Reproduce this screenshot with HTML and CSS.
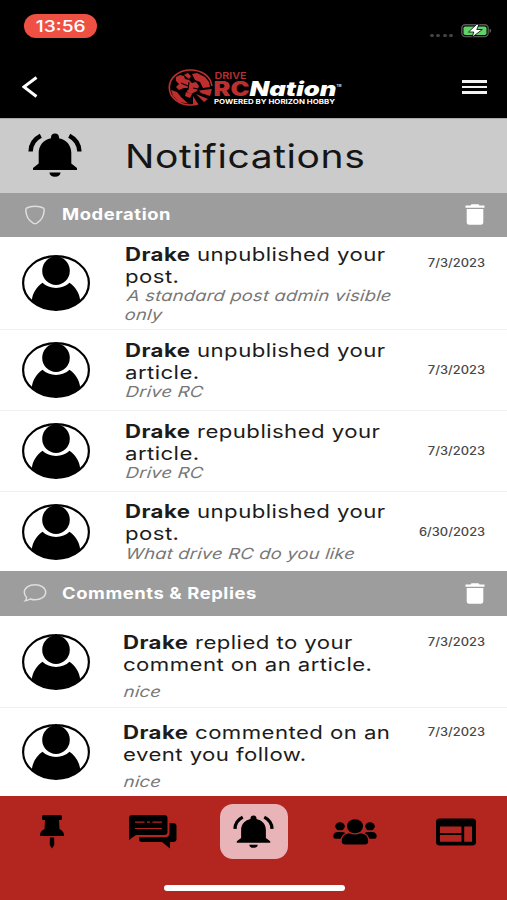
FILE: index.html
```html
<!DOCTYPE html>
<html lang="en">
<head>
<meta charset="utf-8">
<title>Notifications</title>
<link rel="stylesheet" href="styles.css">
</head>
<body>
<svg class="defs" width="0" height="0" aria-hidden="true">
  <symbol id="avatar" viewBox="0 0 68 56" preserveAspectRatio="none">
    <ellipse cx="34" cy="28" rx="32.9" ry="26.9" fill="#fff"/>
    <path d="M9.8 45.5C10.500 38 15 31.500 20.500 27.800C24 31 28.500 33 34 33C39.500 33 44 31 47.500 27.800C53 31.500 57.500 38 58.200 45.500C53 52 44 55 34 55S15 52 9.800 45.500Z"/>
    <ellipse cx="34" cy="15.800" rx="13.800" ry="14.200"/>
    <ellipse cx="34" cy="28" rx="32.900" ry="26.900" fill="none" stroke="#000" stroke-width="2.200"/>
  </symbol>
  <symbol id="bell" viewBox="0 0 54 44" preserveAspectRatio="none">
    <path d="M27 0.500C29.500 0.500 31 2 31 4.500V5.300C39 7 43.300 13 43.300 20V30.500L49 35V37H5V35L10.700 30.500V20C10.700 13 15 7 23 5.300V4.500C23 2 24.500 0.500 27 0.500ZM21.500 39.500H32.500C32.500 42 30.500 43.700 27 43.700S21.500 42 21.500 39.500Z"/>
    <path d="M2.600 18.500C2.800 11.500 6.500 6 12.800 2.800M51.400 18.500C51.200 11.500 47.500 6 41.200 2.800" fill="none" stroke="#000" stroke-width="4.400"/>
  </symbol>
  <symbol id="trash" viewBox="0 0 20 21" preserveAspectRatio="none">
    <path fill="#fff" d="M.5 1.500H5.500L6.500.3H13.500L14.500 1.500H19.500V3.800H.5ZM1.700 5H18.300V18.500Q18.300 20.700 15.800 20.700H4.200Q1.700 20.700 1.700 18.500Z"/>
  </symbol>
</svg>

<div class="screen">
  <header class="top">
    <div class="status">
      <div class="clock"><span>13:56</span></div>
      <div class="status-right">
        <span class="signal"><i></i><i></i><i></i><i></i></span>
        <svg class="battery" width="31" height="14" viewBox="0 0 31 14">
          <rect x=".8" y=".8" width="26.400" height="11.800" rx="3.500" fill="none" stroke="#585858" stroke-width="1.400"/>
          <path d="M29 5.200Q30.700 6.700 29 8.400Z" fill="#585858" stroke="#585858"/>
          <rect x="2.500" y="2.400" width="23" height="8.600" rx="1.800" fill="#5fd467"/>
          <path d="M15.800.3 7.500 8H12.800L11 13.300 21.300 5.500H15.800L18 .3Z" fill="#fff" stroke="#000" stroke-width=".8"/>
        </svg>
      </div>
    </div>
    <div class="bar">
      <svg class="back" width="17" height="22" viewBox="0 0 17 22"><path d="M14.500 1.500 2 10.900 14.500 20.500" fill="none" stroke="#fff" stroke-width="3"/></svg>
      <svg class="logo" width="176" height="40" viewBox="167 67 176 40">
        <path d="M211.800 86C211 76.500 202 70 190.500 70C178.500 70 169.300 78 169.300 87.500S178.500 105 190.500 105C193 105 196 104.500 198 104" fill="none" stroke="#bd2f2f" stroke-width="1.700"/>
        <g fill="#bd2f2f">
          <path d="M192 74 197 73 205 77 209 82 210 87 203 88 200 82 195 80Z"/>
          <path d="M176 77 180 75 184 76 185 79 189 80 192 83 196 82 199 86 197 91 191 94 187 92 188 88 184 88 179 90 176 87 179 84 176 81Z"/>
          <path d="M184 75 188 73 191 76 189 79ZM186 92 192 94 190 98 185 96Z"/>
          <path d="M171 90 177 92 181 97 188 103.500 179 102 173 96Z"/>
          <path d="M199 90.500 212 89 210 96 201 93ZM196 94 208 99 204 102ZM193 96 198 104 193 105Z"/>
        </g>
        <path d="M181 83 188 86M189 82 188 90M193 88 198 89" fill="none" stroke="#000" stroke-width="1.100"/>
        <g font-family="Inter, 'Liberation Sans', sans-serif">
          <text x="214.500" y="78.500" font-size="8.300" font-weight="600" fill="#bd2f2f" textLength="32" lengthAdjust="spacingAndGlyphs">DRIVE</text>
          <text x="213.500" y="95.500" font-size="19.500" font-weight="900" fill="#bd2f2f" textLength="36" lengthAdjust="spacingAndGlyphs">RC</text>
          <text x="249.500" y="95.500" font-size="20" font-weight="900" font-style="italic" fill="#fff" textLength="87" lengthAdjust="spacingAndGlyphs">Nation</text>
          <text x="214" y="103.800" font-size="6.600" font-weight="700" fill="#fff" textLength="121" lengthAdjust="spacingAndGlyphs">POWERED BY HORIZON HOBBY</text>
          <text x="336.500" y="87" font-size="3.500" font-weight="700" fill="#ddd" textLength="5" lengthAdjust="spacingAndGlyphs">TM</text>
        </g>
      </svg>
      <div class="menu"><i></i><i></i><i></i></div>
    </div>
  </header>

  <div class="title">
    <svg class="title-bell"><use href="#bell"/></svg>
    <h1>Notifications</h1>
  </div>

  <div class="section">
    <svg class="section-icon" viewBox="0 0 24 20"><path d="M12 1.200C15.500 1.200 18.500 1.900 20.300 3Q21.300 3.700 21.200 5C21 11.500 18.500 15.500 13.500 18.400Q12 19.200 10.500 18.400C5.500 15.500 3 11.500 2.800 5Q2.700 3.700 3.700 3C5.500 1.900 8.500 1.200 12 1.200Z"/></svg>
    <h2>Moderation</h2>
    <svg class="trash"><use href="#trash"/></svg>
  </div>
  <article class="row first">
    <svg class="avatar"><use href="#avatar"/></svg>
    <div class="body">
      <p class="line"><b>Drake</b> unpublished your<br>post.</p>
      <p class="note">A standard post admin visible<br>only</p>
    </div>
    <time>7/3/2023</time>
  </article>
  <article class="row">
    <svg class="avatar"><use href="#avatar"/></svg>
    <div class="body">
      <p class="line"><b>Drake</b> unpublished your<br>article.</p>
      <p class="note">Drive RC</p>
    </div>
    <time>7/3/2023</time>
  </article>
  <article class="row">
    <svg class="avatar"><use href="#avatar"/></svg>
    <div class="body">
      <p class="line"><b>Drake</b> republished your<br>article.</p>
      <p class="note">Drive RC</p>
    </div>
    <time>7/3/2023</time>
  </article>
  <article class="row short">
    <svg class="avatar"><use href="#avatar"/></svg>
    <div class="body">
      <p class="line"><b>Drake</b> unpublished your<br>post.</p>
      <p class="note">What drive RC do you like</p>
    </div>
    <time>6/30/2023</time>
  </article>

  <div class="section tall">
    <svg class="section-icon" viewBox="0 0 24 20"><path d="M2.300 17.700C3.300 16.700 3.700 15.500 3.500 14.300C2 12.800 1.300 11.200 1.300 9.300C1.300 5 6 1.700 12 1.700S22.700 5 22.700 9.300S18 16.800 12 16.800C10.300 16.800 8.700 16.500 7.300 16C5.800 17 4.200 17.600 2.300 17.700Z"/></svg>
    <h2>Comments &amp; Replies</h2>
    <svg class="trash"><use href="#trash"/></svg>
  </div>
  <article class="row comment">
    <svg class="avatar"><use href="#avatar"/></svg>
    <div class="body">
      <p class="line"><b>Drake</b> replied to your<br>comment on an article.</p>
      <p class="note">nice</p>
    </div>
    <time>7/3/2023</time>
  </article>
  <article class="row comment last">
    <svg class="avatar"><use href="#avatar"/></svg>
    <div class="body">
      <p class="line"><b>Drake</b> commented on an<br>event you follow.</p>
      <p class="note">nice</p>
    </div>
    <time>7/3/2023</time>
  </article>

  <nav class="tabs">
    <div class="tab-row">
      <div class="tab"><svg width="26" height="36" viewBox="0 0 26 36"><path d="M3 2.500Q3 1 4.500 1H21.500Q23 1 23 2.500V4.500Q23 6 21.500 6H20L20.500 15Q25 17.500 25 21V22H1V21Q1 17.500 5.500 15L6 6H4.500Q3 6 3 4.500ZM10.800 23.500H15.200V31L13 34.500 10.800 31Z"/></svg></div>
      <div class="tab"><svg width="50" height="36" viewBox="0 0 50 36"><path d="M4.500 1H36Q39.500 1 39.500 4V18Q39.500 21 36 21H8L1 26V4Q1 1 4.500 1Z"/><path d="M41.500 9H44.500Q48.500 9 48.500 12V25Q48.500 28 45 28H42V34.500L34 28H14.500Q11 28 11 25.500V23.200H37Q41.500 23.200 41.500 19Z"/><path d="M7 8.200H16.500M19 8.200H22M24.500 8.200H34M7 14.500H34" stroke="#b32620" stroke-width="1.200"/></svg></div>
      <div class="tab active"><svg class="tab-bell"><use href="#bell"/></svg></div>
      <div class="tab"><svg width="44" height="28" viewBox="0 0 44 28"><ellipse cx="22" cy="8.300" rx="8" ry="7"/><ellipse cx="7" cy="8.300" rx="4.800" ry="4"/><ellipse cx="37" cy="8.300" rx="4.800" ry="4"/><path d="M8.800 23.500C8.800 18 12 15.500 17 15.500Q22 17.500 27 15.500C32 15.500 35.200 18 35.200 23.500Q35.200 26.500 31.500 26.500H12.500Q8.800 26.500 8.800 23.500ZM.3 18.500Q.3 14 5 14H9Q11 14 12.300 15Q8.500 17 7.400 20.800H2.500Q.3 20.800 .3 18.500ZM43.700 18.500Q43.700 14 39 14H35Q33 14 31.700 15Q35.500 17 36.600 20.800H41.500Q43.700 20.800 43.700 18.500Z"/></svg></div>
      <div class="tab"><svg width="42" height="28" viewBox="0 0 42 28"><path fill-rule="evenodd" d="M5 .5H37Q41 .5 41 3.800V24.200Q41 27.500 37 27.500H5Q1 27.500 1 24.200V3.800Q1 .5 5 .5ZM5 8.500V15H26.500V8.500ZM5 17V23.800H26.500V17ZM29.200 8.500V23.800H37V8.500Z"/></svg></div>
    </div>
    <div class="home"></div>
  </nav>
</div>
</body>
</html>
```

FILE: styles.css
```css
* { box-sizing: border-box; }
body { margin: 0; background: #fff; font-family: Inter, "Liberation Sans", sans-serif; color: #1c1c1c; }
h1, h2, p { margin: 0; white-space: nowrap; transform-origin: left center; }
svg { display: block; flex: none; }
.defs { position: absolute; }
.screen { width: 507px; height: 900px; display: flex; flex-direction: column; overflow: hidden; }

.top { height: 118px; flex: none; background: #000; }
.status { height: 56px; padding: 14px 15px 0 24px; display: flex; justify-content: space-between; }
.clock { width: 73px; height: 24px; border-radius: 12px; background: #ee5144; color: #fff; display: flex; align-items: center; justify-content: center; font-size: 16px; font-weight: 500; }
.clock span { transform: scaleX(1.2); }
.status-right { display: flex; padding-top: 10px; gap: 8px; }
.signal { display: flex; gap: 2.500px; padding-top: 9.500px; }
.signal i { width: 4px; height: 3.500px; border-radius: 50%; background: #444; }
.bar { height: 62px; padding: 0 20px 0 22px; display: flex; align-items: center; justify-content: space-between; }
.back { margin-right: 1px; }
.logo { margin-left: 7px; }
.menu { width: 25px; display: flex; flex-direction: column; gap: 3px; }
.menu i { height: 2.800px; background: #f2f2f2; }

.title { height: 75px; flex: none; background: #cbcbcb; display: flex; align-items: center; padding-left: 28px; border-top: 1px solid #aaa; }
.title-bell { width: 54px; height: 44px; margin-bottom: 3px; }
h1 { margin-left: 43px; font-size: 32.500px; font-weight: 400; letter-spacing: .5px; color: #151515; transform: scaleX(1.2); }

.section { height: 44px; flex: none; background: #9d9d9d; display: flex; align-items: center; padding: 0 22px 1px 23px; }
.section.tall { height: 45px; }
.section-icon { width: 24px; height: 20px; fill: none; stroke: #dedede; stroke-width: 1.500; }
h2 { flex: 1; margin-left: 15px; font-size: 15.300px; font-weight: 700; letter-spacing: .5px; color: #fff; transform: scaleX(1.2); }
.trash { width: 20px; height: 21px; }

.row { height: 81px; flex: none; display: flex; align-items: center; padding: 0 22px; border-top: 1px solid #f0f0f0; }
.row.first { height: 92px; border-top: 0; }
.first .line { position: relative; top: 1px; }
.row.short { height: 80px; }
.avatar { width: 68px; height: 56px; }
.body { flex: 1; margin-left: 35px; }
.line { font-size: 18.200px; line-height: 22px; letter-spacing: .35px; transform: scaleX(1.22); }
.note { font-size: 15.300px; line-height: 19px; font-style: italic; letter-spacing: .18px; color: #777; transform: skewX(-7deg) scaleX(1.2); position: relative; top: -.5px; left: 1px; }
time { font-size: 11.500px; font-weight: 500; color: #484848; transform: scaleX(1.12); transform-origin: right center; }
.first time { margin-bottom: 40px; }
.comment { height: 91px; border-top: 0; }
.comment .body { margin-left: 33px; padding-top: 9px; }
.comment .note { margin-top: 8px; }
.comment time { margin-bottom: 40px; }
.comment.last { height: 89px; border-top: 1px solid #f0f0f0; }
.comment.last .body { padding-top: 8px; }

.tabs { height: 104px; flex: none; background: #b32620; }
.tab-row { display: grid; grid-template-columns: repeat(5, 101px); padding: 8px 0 0 1px; height: 64px; }
.tab { display: flex; align-items: center; justify-content: center; }
.active { width: 68px; height: 55px; justify-self: center; border-radius: 13px; background: #e8b4b8; }
.tab-bell { width: 41px; height: 33px; }
.home { width: 181px; height: 6px; border-radius: 3px; background: #fff; margin: 25px auto 0; position: relative; left: .5px; }
```
